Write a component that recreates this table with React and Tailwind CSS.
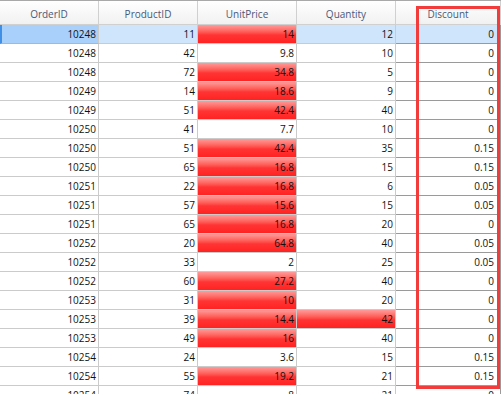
const rows = [
  [10248, 11, 14, 12, 0],
  [10248, 42, 9.8, 10, 0],
  [10248, 72, 34.8, 5, 0],
  [10249, 14, 18.6, 9, 0],
  [10249, 51, 42.4, 40, 0],
  [10250, 41, 7.7, 10, 0],
  [10250, 51, 42.4, 35, 0.15],
  [10250, 65, 16.8, 15, 0.15],
  [10251, 22, 16.8, 6, 0.05],
  [10251, 57, 15.6, 15, 0.05],
  [10251, 65, 16.8, 20, 0],
  [10252, 20, 64.8, 40, 0.05],
  [10252, 33, 2, 25, 0.05],
  [10252, 60, 27.2, 40, 0],
  [10253, 31, 10, 20, 0],
  [10253, 39, 14.4, 42, 0],
  [10253, 49, 16, 40, 0],
  [10254, 24, 3.6, 15, 0.15],
  [10254, 55, 19.2, 21, 0.15],
  [10254, 74, 8, 21, 0],
];

const columns = ["OrderID", "ProductID", "UnitPrice", "Quantity", "Discount"];

const grid = "grid grid-cols-[99px_99px_99px_99px_105px]";

const redBar =
  "bg-linear-to-b from-[#ff9a9a] via-[#ff3434] via-55% to-[#ff2222]";

function Cell({ children, className = "" }) {
  return (
    <div
      className={`flex h-[19px] items-center justify-end border-b border-r border-[#cbcbcb] text-[10px] text-[#111] ${className}`}
    >
      {children}
    </div>
  );
}

export default function App() {
  return (
    <div
      className="relative h-[394px] w-[501px] overflow-hidden bg-white"
      style={{ fontFamily: '"Open Sans", "Noto Sans", sans-serif' }}
    >
      <div className={`${grid} border-t border-[#a9a9a9]`}>
        {columns.map((c) => (
          <div
            key={c}
            className="flex h-[24px] items-center justify-center border-b border-r border-[#d0d0d0] bg-linear-to-b from-white to-[#f1f1f1] pt-[4px] text-[10px] text-[#4a5878]"
          >
            {c}
          </div>
        ))}
      </div>

      {rows.map((r, i) => {
        const sel = i === 0;
        const rowBg = sel ? "bg-[#cfe5fc]" : "bg-white";
        return (
          <div key={i} className={grid}>
            <Cell
              className={
                sel
                  ? "border-l-2 border-l-[#3f8fe6] border-b-[#8fbdf0] bg-[#a9d0fb] pr-[2px]"
                  : "bg-white pr-[2px]"
              }
            >
              {r[0]}
            </Cell>
            <Cell className={`${rowBg} pr-[2px]`}>{r[1]}</Cell>
            <Cell className={`${r[2] >= 10 ? redBar : rowBg} pr-[2px]`}>
              {r[2]}
            </Cell>
            <Cell className={`${r[3] > 40 ? redBar : rowBg} pr-[2px]`}>
              {r[3]}
            </Cell>
            <Cell
              className={`${rowBg} border-b-[#9a9a9a] border-r-[#9a9a9a] pr-[6px]`}
            >
              {r[4]}
            </Cell>
          </div>
        );
      })}

      <div className="pointer-events-none absolute left-[416px] top-[6px] h-[383px] w-[84px] border-[3px] border-[#f23c3c]" />
    </div>
  );
}
